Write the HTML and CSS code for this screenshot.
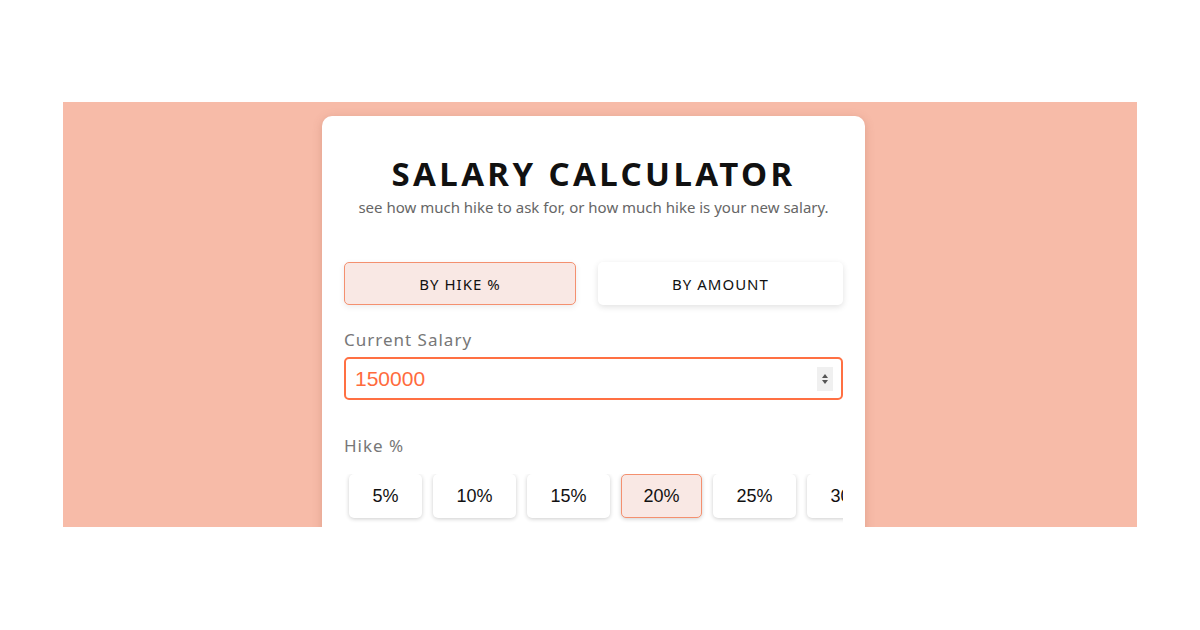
FILE: index.html
```html
<!DOCTYPE html>
<html>
<head>
<meta charset="utf-8">
<link rel="stylesheet" href="styles.css">
</head>
<body>
<div class="stage">
  <div class="card">
    <h1 class="title">SALARY CALCULATOR</h1>
    <p class="subtitle">see how much hike to ask for, or how much hike is your new salary.</p>
    <div class="toggle">
      <button class="tbtn active">BY HIKE %</button>
      <button class="tbtn">BY AMOUNT</button>
    </div>
    <label class="label">Current Salary</label>
    <div class="input">
      <span class="value">150000</span>
      <span class="spin">
        <svg width="8" height="14" viewBox="0 0 8 14"><path d="M4 2 L7 6 L1 6 Z" fill="#555"/><path d="M1 8 L7 8 L4 12 Z" fill="#555"/></svg>
      </span>
    </div>
    <label class="label hike">Hike %</label>
    <div class="chips">
      <button class="chip">5%</button>
      <button class="chip">10%</button>
      <button class="chip">15%</button>
      <button class="chip active">20%</button>
      <button class="chip">25%</button>
      <button class="chip">30%</button>
    </div>
  </div>
</div>
</body>
</html>
```

FILE: styles.css
```css
* { box-sizing: border-box; }
body {
  margin: 0;
  background: #fff;
  font-family: "Noto Sans", "Open Sans", sans-serif;
}
.stage {
  margin: 102px 63px 0;
  height: 425px;
  background: #f7bba8;
  overflow: hidden;
  padding: 14px 0 0 259px;
}
.card {
  width: 543px;
  height: 600px;
  background: #fff;
  border-radius: 10px;
  box-shadow: 0 2px 10px rgba(150, 80, 60, 0.25);
  padding: 36px 22px 0;
}
.title {
  margin: 0;
  text-align: center;
  font-size: 33px;
  font-weight: 700;
  letter-spacing: 3.4px;
  color: #111;
  line-height: 44px;
}
.subtitle {
  margin: 0;
  text-align: center;
  font-size: 15px;
  color: #666;
  line-height: 22px;
}
.toggle {
  display: flex;
  gap: 22px;
  margin-top: 44px;
}
.tbtn {
  width: 245px;
  height: 43px;
  border: 1px solid transparent;
  border-radius: 5px;
  background: #fff;
  box-shadow: 0 2px 6px rgba(0,0,0,0.12);
  font-family: "Noto Sans", sans-serif;
  font-size: 15px;
  letter-spacing: 1px;
  color: #111;
}
.tbtn.active {
  width: 232px;
  background: #f9e8e4;
  border-color: #f4906f;
  box-shadow: 0 2px 6px rgba(0,0,0,0.08);
}
.label {
  display: block;
  margin-top: 22px;
  font-size: 17px;
  letter-spacing: 1px;
  color: #777;
  line-height: 26px;
}
.label.hike { margin-top: 33px; }
.input {
  margin-top: 4px;
  height: 43px;
  border: 2px solid #ff7043;
  border-radius: 5px;
  display: flex;
  align-items: center;
  justify-content: space-between;
  padding: 0 8px 0 9px;
}
.value {
  font-family: "Liberation Sans", Arial, sans-serif;
  font-size: 21px;
  color: #ff6b3d;
}
.spin {
  width: 16px;
  height: 24px;
  background: #f0f0f0;
  display: flex;
  align-items: center;
  justify-content: center;
}
.chips {
  display: flex;
  gap: 11px;
  margin-top: 15px;
  padding-left: 5px;
  overflow: hidden;
  padding-bottom: 10px;
}
.chip {
  flex: none;
  width: 83px;
  height: 44px;
  border: 1px solid transparent;
  border-radius: 5px;
  background: #fff;
  box-shadow: 0 1px 4px rgba(0,0,0,0.2);
  font-family: "Liberation Sans", Arial, sans-serif;
  font-size: 18px;
  color: #111;
}
.chip:first-child { width: 73px; }
.chip.active {
  background: #f9e8e4;
  border-color: #f4906f;
  width: 81px;
}
```
